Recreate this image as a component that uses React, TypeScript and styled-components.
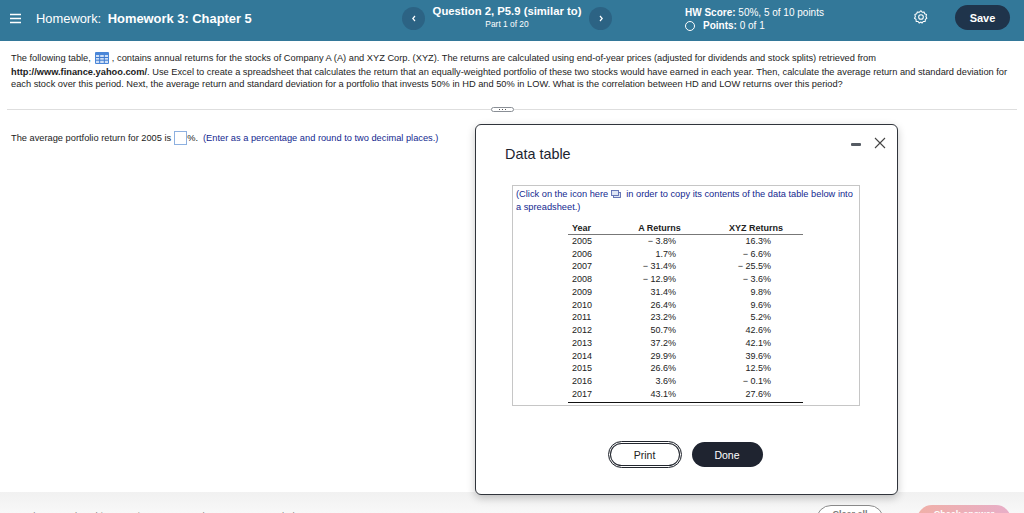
import React from "react";
import styled, { createGlobalStyle } from "styled-components";

const Global = createGlobalStyle`
  html, body { margin: 0; padding: 0; background: #fff; }
  body { font-family: "Liberation Sans", Arial, sans-serif; color: #1c1c1c; }
  * { box-sizing: border-box; }
`;
const Page = styled.div`
  position: relative; width: 1024px; height: 513px; overflow: hidden;
  display: flex; flex-direction: column; background: #fff;
`;
const Header = styled.header`
  height: 41px; flex: none; background: #337899; color: #fff;
  display: flex; align-items: center; padding: 0 14px 0 10px;
`;
const Burger = styled.svg`width: 11px; height: 11px; flex: none; margin-top: -5px;`;
const Crumb = styled.div`
  width: 366px; flex: none; margin-left: 15px; font-size: 12.9px; white-space: nowrap; margin-top: -5px;
  b { margin-left: 3px; }
`;
const Round = styled.button`
  width: 23px; height: 23px; border-radius: 50%; border: 0; padding: 0; background: #2c6384; color: #fff;
  display: flex; align-items: center; justify-content: center; flex: none; margin-top: -5px;
`;
const QuestionBlock = styled.div`
  width: 164px; flex: none; text-align: center; margin-top: -7px;
  strong { display: block; font-size: 11.3px; line-height: 14px; white-space: nowrap; }
  span { display: block; font-size: 8.4px; line-height: 11px; margin-top: 1px; }
`;
const Score = styled.div`
  width: 229px; flex: none; margin-left: 73px; font-size: 10px; line-height: 13px; margin-top: -3px; white-space: nowrap;
`;
const PointsRow = styled.div`display: flex; align-items: center; gap: 8px;`;
const Ring = styled.span`width: 10px; height: 10px; border: 1.2px solid #fff; border-radius: 50%; display: block;`;
const Gear = styled.svg`width: 14px; height: 14px; flex: none; margin-top: -7px;`;
const Save = styled.button`
  width: 55px; height: 25px; margin-left: 27px; margin-top: -6px; flex: none; border: 0; border-radius: 13px;
  background: #1f344b; color: #fff; font: bold 11px "Liberation Sans", Arial, sans-serif;
`;
const Main = styled.main`flex: 1; min-height: 0; padding: 10px 7px 0; position: relative;`;
const Intro = styled.div`
  padding: 0 4px; font-size: 9.27px; height: 48px; white-space: nowrap;
`;
const IntroLine = styled.div<{ $h: number }>`height: ${p => p.$h}px; display: flex; align-items: center; gap: 3px;`;
const TableIcon = styled.svg`width: 14px; height: 12px; flex: none; margin: 0 0 0 1px;`;
const Rule = styled.div`position: relative; height: 1px; background: #dedede; margin-top: 10px;`;
const Pill = styled.span`
  position: absolute; left: 484px; top: -2px; width: 23px; height: 5px; background: #fff;
  border: 1px solid #8a8f96; border-radius: 3px; display: flex; align-items: center; justify-content: center; gap: 2px;
  i { width: 1px; height: 1px; background: #555; display: block; }
`;
const Question = styled.div`
  margin-top: 20px; padding: 0 4px; font-size: 9.27px; display: flex; align-items: center; height: 16px; white-space: nowrap;
`;
const Blank = styled.span`width: 13px; height: 14px; margin: 0 0 0 3px; border: 1px solid #8db0e0; display: block;`;
const Hint = styled.span`color: #13288f; margin-left: 5px;`;
const Footer = styled.footer`
  height: 21px; flex: none; background: linear-gradient(#f1f1f1, #f8f8f8); position: relative;
  display: flex; padding: 13px 13px 0 21px; font-size: 9.5px; color: #777;
`;
const FooterText = styled.span`flex: 1; display: flex; gap: 24px; white-space: nowrap; color: #888; padding-top: 5px; word-spacing: 3px;`;
const ClearAll = styled.button`
  width: 68px; height: 30px; border: 1px solid #8b8b8b; border-radius: 15px; background: #fff; color: #777;
  font: bold 9px "Liberation Sans", Arial, sans-serif; padding: 0 0 12px; flex: none;
`;
const Check = styled.button`
  width: 94px; height: 30px; margin-left: 33px; border: 0; border-radius: 15px; color: #fff; flex: none;
  background: linear-gradient(90deg, #f0b0a8, #e8aec8);
  font: bold 9px "Liberation Sans", Arial, sans-serif; padding: 0 0 12px;
`;
const Dialog = styled.section`
  position: absolute; left: 475px; top: 124px; width: 423px; height: 371px; background: #fff; z-index: 2;
  border: 1.5px solid #30343b; border-radius: 6px; box-shadow: 0 3px 8px rgba(0,0,0,.22);
  padding: 20px 36px 0 29px; display: flex; flex-direction: column;
`;
const Controls = styled.div`position: absolute; right: 11px; top: 12px; display: flex; align-items: center; gap: 13px;`;
const Minus = styled.span`width: 10px; height: 3.5px; background: #555b63; border-radius: 1px; display: block; margin-top: 3px;`;
const Close = styled.svg`width: 12px; height: 12px; display: block;`;
const Title = styled.h2`margin: 0; font-size: 14.4px; line-height: 18px; font-weight: 400; color: #1c2430;`;
const DataBox = styled.div`
  margin: 22px 0 0 7px; width: 348px; height: 221px; border: 1px solid #c6c6c6; padding: 2px 3px 0;
`;
const Note = styled.div`
  color: #13288f; font-size: 9.27px; line-height: 12.5px;
`;
const CopyIcon = styled.svg`width: 10px; height: 8px; margin: 0 5px 0 3px; vertical-align: -1px;`;
const DataTable = styled.table`
  border-collapse: collapse; margin: 9px 0 0 52px; width: 235px; table-layout: fixed; font-size: 9px; color: #222;
  th { font-weight: 700; height: 12.5px; padding: 0; text-align: center; border-bottom: 1px solid #777; }
  th:first-child { text-align: left; padding-left: 4px; }
  th:nth-child(2) { padding-right: 4px; }
  th:nth-child(3) { padding-left: 2px; }
  td { height: 12.75px; padding: 0; }
  td:first-child { padding-left: 4px; }
  tbody tr:last-child td { border-bottom: 1.5px solid #111; height: 14.5px; padding-bottom: 2px; }
`;
const Num = styled.td<{ $pr: number }>`text-align: right; padding-right: ${p => p.$pr}px !important; white-space: pre;`;
const Buttons = styled.div`display: flex; justify-content: center; gap: 10px; margin: 35px 0 0 4px; align-items: center;`;
const Print = styled.button`
  width: 74px; height: 27px; border-radius: 14px; background: #fff; border: 1px solid #23272f; outline: 0; position: relative;
  box-shadow: inset 0 0 0 1px #fff, inset 0 0 0 2px #23272f;
  font: 10.5px "Liberation Sans", Arial, sans-serif; color: #222;
`;
const Done = styled.button`
  width: 71px; height: 25px; border-radius: 13px; border: 0; background: #1f2430; color: #fff;
  font: 10.5px "Liberation Sans", Arial, sans-serif;
`;

const rows: [string, string, string][] = [
  ["2005", "\u2212 3.8%", "16.3%"], ["2006", "1.7%", "\u2212 6.6%"], ["2007", "\u2212 31.4%", "\u2212 25.5%"],
  ["2008", "\u2212 12.9%", "\u2212 3.6%"], ["2009", "31.4%", "9.8%"], ["2010", "26.4%", "9.6%"],
  ["2011", "23.2%", "5.2%"], ["2012", "50.7%", "42.6%"], ["2013", "37.2%", "42.1%"],
  ["2014", "29.9%", "39.6%"], ["2015", "26.6%", "12.5%"], ["2016", "3.6%", "\u2212 0.1%"], ["2017", "43.1%", "27.6%"],
];

export default function App() {
  return (
    <Page>
      <Global />
      <Header>
        <Burger viewBox="0 0 11 11" fill="none" stroke="#fff" strokeWidth="1.3">
          <path d="M0 1.5h11M0 5.5h11M0 9.5h11" />
        </Burger>
        <Crumb>Homework: <b>Homework 3: Chapter 5</b></Crumb>
        <Round aria-label="Previous">
          <svg width="6" height="7" viewBox="0 0 6 7" fill="none" stroke="#fff" strokeWidth="1.2"><path d="M4 1 1.8 3.5 4 6" /></svg>
        </Round>
        <QuestionBlock>
          <strong>Question 2, P5.9 (similar to)</strong>
          <span>Part 1 of 20</span>
        </QuestionBlock>
        <Round aria-label="Next">
          <svg width="6" height="7" viewBox="0 0 6 7" fill="none" stroke="#fff" strokeWidth="1.2"><path d="M2 1l2.2 2.5L2 6" /></svg>
        </Round>
        <Score>
          <div><b>HW Score:</b> 50%, 5 of 10 points</div>
          <PointsRow><Ring /><span><b>Points:</b> 0 of 1</span></PointsRow>
        </Score>
        <Gear viewBox="0 0 24 24" fill="none" stroke="#fff" strokeWidth="1.8" strokeLinejoin="round">
          <path d="M12 1.5l2 2.7 3.3-.5 1 3.2 3.1 1.3-.9 3.3 1.5 3-2.6 2-.2 3.4-3.4.2-2 2.6L12 21l-2.9 1.7-2-2.6-3.4-.2-.2-3.4-2.6-2 1.5-3-.9-3.3 3.1-1.3 1-3.2 3.3.5z" transform="translate(0 -.3)" />
          <circle cx="12" cy="12" r="4" />
        </Gear>
        <Save>Save</Save>
      </Header>
      <Main>
        <Intro>
          <IntroLine $h={13}>
            The following table,
            <TableIcon viewBox="0 0 14 12">
              <rect width="14" height="12" rx="1" fill="#4a86d8" />
              <path d="M1 3h12v8H1z" fill="#cfe0f7" />
              <path d="M1 5.5h12M1 8.2h12M4.7 3v8M9.3 3v8" stroke="#3f7bd0" strokeWidth="1" />
            </TableIcon>
            , contains annual returns for the stocks of Company A (A) and XYZ Corp. (XYZ). The returns are calculated using end-of-year prices (adjusted for dividends and stock splits) retrieved from
          </IntroLine>
          <IntroLine $h={15}><span><b>http://www.finance.yahoo.com/</b>. Use Excel to create a spreadsheet that calculates the return that an equally-weighted portfolio of these two stocks would have earned in each year. Then, calculate the average return and standard deviation for</span></IntroLine>
          <IntroLine $h={10}>each stock over this period. Next, the average return and standard deviation for a portfolio that invests 50% in HD and 50% in LOW. What is the correlation between HD and LOW returns over this period?</IntroLine>
        </Intro>
        <Rule><Pill><i /><i /><i /></Pill></Rule>
        <Question>
          The average portfolio return for 2005 is<Blank />%.
          <Hint>(Enter as a percentage and round to two decimal places.)</Hint>
        </Question>
      </Main>
      <Footer>
        <FooterText><span>Help me solve this</span><span>View an example</span><span>Get more help</span></FooterText>
        <ClearAll>Clear all</ClearAll>
        <Check>Check answer</Check>
      </Footer>
      <Dialog>
        <Controls>
          <Minus />
          <Close viewBox="0 0 12 12" fill="none" stroke="#444" strokeWidth="1.1"><path d="M1 1l10 10M11 1 1 11" /></Close>
        </Controls>
        <Title>Data table</Title>
        <DataBox>
          <Note>
            (Click on the icon here
            <CopyIcon viewBox="0 0 10 8" fill="#dfe6f5" stroke="#5a6bb0" strokeWidth=".9">
              <rect x="2.5" y="2.5" width="7" height="5" /><rect x=".5" y=".5" width="7" height="5" />
            </CopyIcon>
            in order to copy its contents of the data table below into a spreadsheet.)
          </Note>
          <DataTable>
            <colgroup><col style={{ width: 48 }} /><col style={{ width: 91 }} /><col style={{ width: 96 }} /></colgroup>
            <thead><tr><th>Year</th><th>A Returns</th><th>XYZ Returns</th></tr></thead>
            <tbody>
              {rows.map(r => (
                <tr key={r[0]}><td>{r[0]}</td><Num $pr={31}>{r[1]}</Num><Num $pr={32}>{r[2]}</Num></tr>
              ))}
            </tbody>
          </DataTable>
        </DataBox>
        <Buttons>
          <Print>Print</Print>
          <Done>Done</Done>
        </Buttons>
      </Dialog>
    </Page>
  );
}
